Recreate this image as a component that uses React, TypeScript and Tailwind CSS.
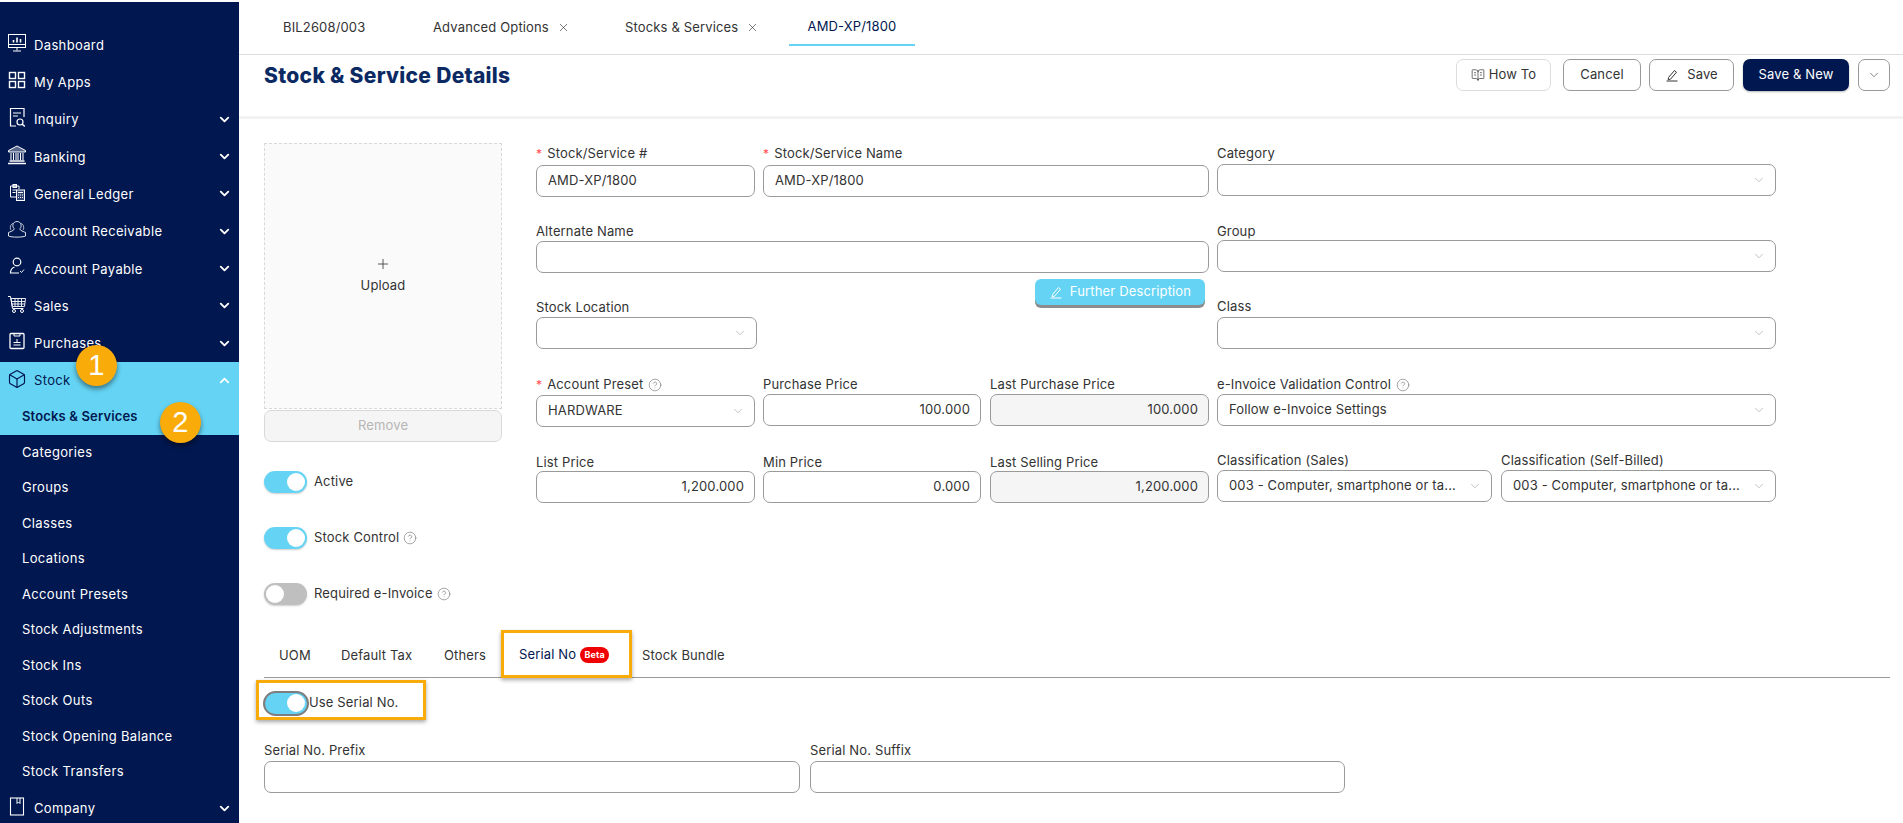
import {
  Box,
  BookOpenText,
  ChevronDown,
  ChevronUp,
  CircleHelp,
  Plus,
  X,
} from "lucide-react";
import type { ReactNode } from "react";

function Ico({ children }: { children: ReactNode }) {
  return (
    <svg
      width="20"
      height="20"
      viewBox="0 0 20 20"
      fill="none"
      stroke="currentColor"
      strokeWidth="1"
      className="shrink-0 -mt-[4px]"
    >
      {children}
    </svg>
  );
}

const DashIcon = () => (
  <Ico>
    <rect x="1.5" y="1.5" width="17" height="13" />
    <path d="M1 11.5h18M10 14.5v3M6 18h8" />
    <path d="M6.5 9.5V7M10 9.5V4.5M13.5 9.5V6" strokeWidth="1.6" />
  </Ico>
);
const AppsIcon = () => (
  <Ico>
    <g strokeWidth="1.4">
      <rect x="2.5" y="2.5" width="6" height="6" />
      <rect x="11.5" y="2.5" width="6" height="6" />
      <rect x="2.5" y="11.5" width="6" height="6" />
      <rect x="11.5" y="11.5" width="6" height="6" />
    </g>
  </Ico>
);
const InquiryIcon = () => (
  <Ico>
    <path d="M9 19H3.5V1.5h13.5V10" strokeWidth="1.2" />
    <path d="M6 6h8M6 9h5" />
    <circle cx="13" cy="15" r="3" strokeWidth="1.2" />
    <path d="M15.2 17.2l2.6 2.2" strokeWidth="1.4" />
  </Ico>
);
const BankIcon = () => (
  <Ico>
    <path d="M10 1L1.5 5.5v1.5h17V5.5z" fill="currentColor" fillOpacity="0.35" />
    <path d="M4 8v7M6.5 8v7M9 8v7M11 8v7M13.5 8v7M16 8v7" strokeWidth="1.1" />
    <path d="M2.5 16h15M1 18.5h18" strokeWidth="1.5" />
  </Ico>
);
const LedgerIcon = () => (
  <Ico>
    <path d="M9 15H3.5V4H12v3" strokeWidth="1" />
    <rect x="6" y="2.5" width="3.5" height="3" fill="currentColor" fillOpacity="0.5" />
    <path d="M5.5 8h4M5.5 10.5h3" />
    <rect x="9.5" y="8" width="8" height="10.5" fill="currentColor" fillOpacity="0.2" />
    <path d="M11 10.5h5M11 13h1M13 13h1M15 13h1M11 15.5h1M13 15.5h1M15 15.5h1" />
  </Ico>
);
const ReceivableIcon = () => (
  <Ico>
    <path d="M7 9.5C5 8 5.5 2.5 10 2.5s5 5.5 3 7c-.5 1 .5 1.5 2 2.5l3.5 1.5v3.5c-3 1.5-14 1.500-17 0V13.500L5 12c1.500-1 2.500-1.500 2-2.500z" opacity="0.85" />
    <path d="M4 11C2.500 9 3.500 5 6 4.500M16 11c1.500-2 .5-6-2-6.500" opacity="0.7" />
  </Ico>
);
const PayableIcon = () => (
  <Ico>
    <circle cx="10" cy="6" r="3.8" strokeWidth="1.2" />
    <path d="M12 17H3.500c0-4 2.500-5.500 4-6" strokeWidth="1.2" />
    <path d="M13 15l1.500 1.500 2.500-3" strokeWidth="0.9" />
  </Ico>
);
const SalesIcon = () => (
  <Ico>
    <path d="M1 2.500h2.500l2 12h11" strokeWidth="1" />
    <path d="M4 4.500h14.500l-1 8H5.300zM8 4.500v8M11 4.500v8M14.500 4.500v8M4.500 7.500h13.500M5 10h12.800" strokeWidth="0.9" />
    <circle cx="7" cy="17" r="1.500" />
    <circle cx="15" cy="17" r="1.500" />
  </Ico>
);
const PurchaseIcon = () => (
  <Ico>
    <rect x="3" y="2.500" width="14" height="15" rx="1" strokeWidth="1.300" />
    <path d="M7 2.500v2.500h6V2.500" strokeWidth="1" />
    <path d="M6.500 14h7M6.500 11.500h7M10 8v3" strokeWidth="1" />
  </Ico>
);
const CompanyIcon = () => (
  <Ico>
    <rect x="3.500" y="2" width="13" height="17" strokeWidth="1.100" />
    <path d="M10 2v5.500l1.500-1.500 1.500 1.500V2" strokeWidth="1" />
  </Ico>
);

const menuTop = [
  { label: "Dashboard", icon: DashIcon },
  { label: "My Apps", icon: AppsIcon },
  { label: "Inquiry", icon: InquiryIcon, arrow: true },
  { label: "Banking", icon: BankIcon, arrow: true },
  { label: "General Ledger", icon: LedgerIcon, arrow: true },
  { label: "Account Receivable", icon: ReceivableIcon, arrow: true },
  { label: "Account Payable", icon: PayableIcon, arrow: true },
  { label: "Sales", icon: SalesIcon, arrow: true },
  { label: "Purchases", icon: PurchaseIcon, arrow: true },
];

const subMenu = [
  "Categories",
  "Groups",
  "Classes",
  "Locations",
  "Account Presets",
  "Stock Adjustments",
  "Stock Ins",
  "Stock Outs",
  "Stock Opening Balance",
  "Stock Transfers",
];

function Sidebar() {
  return (
    <aside className="w-[239px] h-[821px] mt-[2px] shrink-0 overflow-hidden bg-[#00174f] pt-[24px] text-[13px] tracking-[0.35px] text-white">
      {menuTop.map((m) => (
        <div key={m.label} className="h-[37.3px] flex items-center pl-[7px] pr-[7px]">
          <m.icon />
          <span className="ml-[7px] flex-1 mt-[2px]">{m.label}</span>
          {m.arrow && <ChevronDown size={15} strokeWidth={3} />}
        </div>
      ))}
      <div className="h-[37px] flex items-center pl-[7px] pr-[7px] bg-[#65d4f4] text-[#00174f]">
        <Box size={20} strokeWidth={1.4} className="shrink-0 -mt-[3px]" />
        <span className="ml-[7px] flex-1 mt-[2px]">Stock</span>
        <ChevronUp size={15} strokeWidth={3} className="text-white" />
      </div>
      <div className="h-[36px] flex items-center pl-[22px] bg-[#65d4f4] text-[#00174f] font-semibold tracking-[0.15px]">
        Stocks &amp; Services
      </div>
      {subMenu.map((s) => (
        <div key={s} className="h-[35.5px] flex items-center pl-[22px]">
          {s}
        </div>
      ))}
      <div className="h-[37px] flex items-center pl-[7px] pr-[7px]">
        <CompanyIcon />
        <span className="ml-[7px] flex-1 mt-[2px]">Company</span>
        <ChevronDown size={15} strokeWidth={3} />
      </div>
    </aside>
  );
}

function Badge({ n, className }: { n: string; className: string }) {
  return (
    <div
      className={
        "absolute w-[41px] h-[41px] rounded-full bg-[#f9ab0a] flex items-center justify-center text-white text-[29px] shadow-[0_3px_5px_rgba(0,0,0,0.45)] font-['Liberation_Sans',sans-serif] " +
        className
      }
    >
      {n}
    </div>
  );
}

function Toggle({ on, label, help }: { on: boolean; label: string; help?: boolean }) {
  return (
    <div className="flex items-center h-[22px]">
      <div
        className={
          "w-[43px] h-[22px] rounded-full flex items-center px-[2px] shadow-[0_1px_2px_rgba(0,0,0,0.2)] " +
          (on ? "bg-[#65d4f4] justify-end" : "bg-[#bfbfbf] justify-start")
        }
      >
        <div className="w-[18px] h-[18px] rounded-full bg-white" />
      </div>
      <span className="ml-[7px]">{label}</span>
      {help && <CircleHelp size={14} strokeWidth={1.1} className="ml-[4px] text-[#777]" />}
    </div>
  );
}

function Label({ text, req, help }: { text: string; req?: boolean; help?: boolean }) {
  return (
    <div className="h-[18px] pt-[3px] flex items-center whitespace-nowrap">
      {req && <span className="text-[#ff4d4f] mr-[5px] text-[12px]">*</span>}
      {text}
      {help && <CircleHelp size={14} strokeWidth={1.1} className="ml-[5px] text-[#777]" />}
    </div>
  );
}

function Input({ value, right, readOnly }: { value?: string; right?: boolean; readOnly?: boolean }) {
  return (
    <div
      className={
        "h-[32px] rounded-[7px] border border-[#9a9a9a] pl-[11px] pr-[10px] flex items-center whitespace-nowrap " +
        (right ? "justify-end " : "") +
        (readOnly ? "bg-[#f5f5f5]" : "bg-white")
      }
    >
      {value}
    </div>
  );
}

function Select({ value }: { value?: string }) {
  return (
    <div className="h-[32px] rounded-[7px] border border-[#9a9a9a] pl-[11px] pr-[9px] flex items-center whitespace-nowrap bg-white">
      <span className="flex-1 min-w-0">{value}</span>
      <ChevronDown size={14} strokeWidth={1} className="shrink-0 ml-[6px] text-[#999]" />
    </div>
  );
}

function PenIcon() {
  return (
    <svg width="14" height="14" viewBox="0 0 14 14" fill="none" stroke="currentColor" strokeWidth="1">
      <path d="M3.500 9.500L9.500 2.500l2 1.700-6 7-2.300.5z" />
      <path d="M1.500 13h11" />
    </svg>
  );
}

function Form() {
  return (
    <div className="flex-1 min-w-0">
      <div className="flex mt-[24px]">
        <div className="w-[238px] shrink-0">
          <div className="h-[266px] border border-dashed border-[#d9d9d9] bg-[#fafafa] flex flex-col items-center justify-center gap-[4px]">
            <Plus size={16} strokeWidth={1.2} />
            <span>Upload</span>
          </div>
          <div className="h-[32px] mt-[1px] rounded-[7px] border border-[#d9d9d9] bg-[#f5f5f5] text-[#b5b5b5] flex items-center justify-center">
            Remove
          </div>
          <div className="mt-[29px] flex flex-col gap-[34px]">
            <Toggle on label="Active" />
            <Toggle on label="Stock Control" help />
            <Toggle on={false} label="Required e-Invoice" help />
          </div>
        </div>

        <div className="w-[673px] ml-[34px] shrink-0">
          <div className="flex gap-[8px]">
            <div className="w-[219px]">
              <Label text="Stock/Service #" req />
              <div className="mt-[4px]"><Input value="AMD-XP/1800" /></div>
            </div>
            <div className="w-[446px]">
              <Label text="Stock/Service Name" req />
              <div className="mt-[4px]"><Input value="AMD-XP/1800" /></div>
            </div>
          </div>
          <div className="mt-[24px]">
            <Label text="Alternate Name" />
            <div className="mt-[2px]"><Input /></div>
          </div>
          <div className="mt-[6px] -mb-[8px] flex justify-end pr-[4px]">
            <div className="w-[170px] h-[26px] rounded-[6px] bg-[#65d4f4] text-white flex items-center justify-center gap-[7px] shadow-[0_3px_0_#8c8c8c]">
              <PenIcon />
              Further Description
            </div>
          </div>
          <div className="w-[221px]">
            <Label text="Stock Location" />
            <div className="mt-[2px]"><Select /></div>
          </div>
          <div className="mt-[25px] flex gap-[8px]">
            <div className="w-[219px]">
              <Label text="Account Preset" req help />
              <div className="mt-[3px]"><Select value="HARDWARE" /></div>
            </div>
            <div className="w-[218px]">
              <Label text="Purchase Price" />
              <div className="mt-[2px]"><Input value="100.000" right /></div>
            </div>
            <div className="w-[219px] ml-[1px]">
              <Label text="Last Purchase Price" />
              <div className="mt-[2px]"><Input value="100.000" right readOnly /></div>
            </div>
          </div>
          <div className="mt-[25px] flex gap-[8px]">
            <div className="w-[219px]">
              <Label text="List Price" />
              <div className="mt-[1px]"><Input value="1,200.000" right /></div>
            </div>
            <div className="w-[218px]">
              <Label text="Min Price" />
              <div className="mt-[1px]"><Input value="0.000" right /></div>
            </div>
            <div className="w-[219px] ml-[1px]">
              <Label text="Last Selling Price" />
              <div className="mt-[1px]"><Input value="1,200.000" right readOnly /></div>
            </div>
          </div>
        </div>

        <div className="w-[559px] ml-[8px] shrink-0">
          <Label text="Category" />
          <div className="mt-[3px]"><Select /></div>
          <div className="mt-[25px]"><Label text="Group" /></div>
          <div className="mt-[1px]"><Select /></div>
          <div className="mt-[24px]"><Label text="Class" /></div>
          <div className="mt-[3px]"><Select /></div>
          <div className="mt-[25px]"><Label text="e-Invoice Validation Control" help /></div>
          <div className="mt-[2px]"><Select value="Follow e-Invoice Settings" /></div>
          <div className="mt-[24px] flex gap-[9px]">
            <div className="w-[275px]">
              <Label text="Classification (Sales)" />
              <div className="mt-[2px]"><Select value="003 - Computer, smartphone or ta..." /></div>
            </div>
            <div className="w-[275px]">
              <Label text="Classification (Self-Billed)" />
              <div className="mt-[2px]"><Select value="003 - Computer, smartphone or ta..." /></div>
            </div>
          </div>
        </div>
      </div>

      <div className="mt-[25px] h-[48px] border-b border-[#999] flex items-center">
        <div className="w-[77px] pl-[15px] pt-[4px]">UOM</div>
        <div className="w-[103px] pt-[4px]">Default Tax</div>
        <div className="w-[57px] pt-[4px]">Others</div>
        <div className="w-[131px] h-[48px] pl-[15px] pt-[2px] flex items-center border-[3px] border-[#f9ab0a] shadow-[0_2px_4px_rgba(0,0,0,0.35)] text-[#00174f]">
          Serial No
          <span className="ml-[4px] w-[29px] h-[16px] rounded-full bg-[#f00000] text-white text-[9px] font-bold flex items-center justify-center">
            Beta
          </span>
        </div>
        <div className="ml-[10px] pt-[4px]">Stock Bundle</div>
      </div>

      <div className="mt-[2px] -ml-[8px] w-[170px] h-[40px] border-[3px] border-[#f9ab0a] shadow-[0_2px_4px_rgba(0,0,0,0.35)] flex items-center pl-[4px] pt-[6px]">
        <div className="w-[46px] h-[25px] rounded-full bg-[#65d4f4] border-2 border-[#7d7d7d] flex items-center justify-end pr-[2px] shrink-0">
          <div className="w-[18px] h-[18px] rounded-full bg-white" />
        </div>
        <span>Use Serial No.</span>
      </div>

      <div className="mt-[20px] flex gap-[10px]">
        <div className="w-[536px]">
          <Label text="Serial No. Prefix" />
          <div className="mt-[3px]"><Input /></div>
        </div>
        <div className="w-[535px]">
          <Label text="Serial No. Suffix" />
          <div className="mt-[3px]"><Input /></div>
        </div>
      </div>
    </div>
  );
}

export default function App() {
  const tabs = [
    { label: "Advanced Options", w: "w-[192px]" },
    { label: "Stocks & Services", w: "w-[165px]" },
  ];
  return (
    <div className="relative flex w-[1903px] h-[823px] overflow-hidden bg-white text-[13px] tracking-[0.15px] text-[#333] font-['Inter',sans-serif]">
      <Sidebar />
      <main className="flex-1 min-w-0 flex flex-col">
        <div className="h-[55px] shrink-0 border-b border-[#ddd] flex items-start">
          <div className="w-[194px] pl-[44px] h-[46px] pt-[9px] flex items-center">BIL2608/003</div>
          {tabs.map((t) => (
            <div key={t.label} className={t.w + " h-[46px] pt-[9px] flex items-center"}>
              {t.label}
              <X size={13} strokeWidth={1.2} className="ml-[8px]" />
            </div>
          ))}
          <div className="w-[126px] ml-[-1px] h-[46px] pt-[9px] border-b-2 border-[#65d4f4] text-[#00174f] flex items-center justify-center">
            AMD-XP/1800
          </div>
        </div>
        <div className="h-[64px] shrink-0 border-b-[3px] border-[#f2f2f2] flex items-start justify-between pl-[25px] pr-[13px]">
          <h1 className="text-[21px] leading-[42px] font-extrabold tracking-[0.3px] text-[#0b2a63]">
            Stock &amp; Service Details
          </h1>
          <div className="flex mt-[4px]">
            <div className="w-[95px] h-[32px] rounded-[7px] border border-[#dcdcdc] flex items-center justify-center gap-[4px]">
              <BookOpenText size={14} strokeWidth={1.2} />
              How To
            </div>
            <div className="ml-[12px] w-[78px] h-[32px] rounded-[7px] border border-[#999] flex items-center justify-center">
              Cancel
            </div>
            <div className="ml-[8px] w-[85px] h-[32px] rounded-[7px] border border-[#999] flex items-center justify-center gap-[8px]">
              <PenIcon />
              Save
            </div>
            <div className="ml-[9px] w-[106px] h-[32px] rounded-[7px] bg-[#00174f] text-white flex items-center justify-center shadow-[0_1px_2px_rgba(0,0,0,0.3)]">
              Save &amp; New
            </div>
            <div className="ml-[9px] w-[32px] h-[32px] rounded-[7px] border border-[#999] flex items-center justify-center">
              <ChevronDown size={14} strokeWidth={1} />
            </div>
          </div>
        </div>
        <div className="pl-[25px] pr-[13px]">
          <Form />
        </div>
      </main>
      <Badge n="1" className="left-[76px] top-[345px]" />
      <Badge n="2" className="left-[160px] top-[402px]" />
    </div>
  );
}
